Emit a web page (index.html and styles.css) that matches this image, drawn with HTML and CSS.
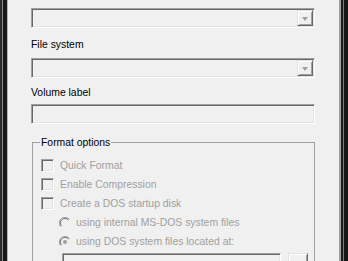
FILE: index.html
```html
<!DOCTYPE html>
<html lang="en">
<head>
    <meta charset="UTF-8">
    <title>Format</title>
    <link rel="stylesheet" href="styles.css">
</head>
<body>
    <div class="window">
        <div class="frame-left"></div>
        <div class="content">
            <div class="combo">
                <div class="drop"><span class="arrow"></span></div>
            </div>

            <div class="label first">File system</div>
            <div class="combo">
                <div class="drop"><span class="arrow"></span></div>
            </div>

            <div class="label">Volume label</div>
            <div class="edit"></div>

            <fieldset class="group">
                <legend>Format options</legend>
                <div class="options">
                    <div class="row">
                        <span class="check"></span>
                        <span>Quick Format</span>
                    </div>
                    <div class="row">
                        <span class="check"></span>
                        <span>Enable Compression</span>
                    </div>
                    <div class="row">
                        <span class="check"></span>
                        <span>Create a DOS startup disk</span>
                    </div>
                    <div class="row sub">
                        <svg class="radio" width="12" height="12" viewBox="0 0 12 12">
                            <path d="M10.5 2.5 A5.5 5.5 0 0 0 1.5 9.5" fill="none" stroke="#a0a0a0"/>
                            <path d="M9.5 3 A4.5 4.5 0 0 0 2.5 9" fill="none" stroke="#6d6d6d"/>
                        </svg>
                        <span>using internal MS-DOS system files</span>
                    </div>
                    <div class="row sub">
                        <svg class="radio" width="12" height="12" viewBox="0 0 12 12">
                            <path d="M10.5 2.5 A5.5 5.5 0 0 0 1.5 9.5" fill="none" stroke="#a0a0a0"/>
                            <path d="M9.5 3 A4.5 4.5 0 0 0 2.5 9" fill="none" stroke="#6d6d6d"/>
                            <circle cx="6" cy="6" r="2" fill="#a0a0a0"/>
                        </svg>
                        <span>using DOS system files located at:</span>
                    </div>
                    <div class="path-row">
                        <div class="edit small"></div>
                        <div class="browse"></div>
                    </div>
                </div>
            </fieldset>
        </div>
        <div class="frame-right"></div>
    </div>
</body>
</html>
```

FILE: styles.css
```css
html, body {
    margin: 0;
    padding: 0;
    background: #f0f0f0;
}
body {
    font-family: 'Liberation Sans', Arial, sans-serif;
    font-size: 10.4px;
    line-height: 13px;
    color: #000;
    overflow: hidden;
}
.window {
    display: flex;
    height: 261px;
    overflow: hidden;
}
.frame-left {
    width: 8px;
    flex: none;
    background: linear-gradient(to right, #2a2a2a 0 2px, #8a8a8a 2px 3px, #161616 3px 7px, #b4b4b4 7px 8px);
}
.frame-right {
    width: 9px;
    flex: none;
    background: linear-gradient(to right, #a0a0a0 0 2px, #1c1c1c 2px 4px, #7a7a7a 4px 5px, #151515 5px 9px);
}
.content {
    flex: 1;
    padding: 8px 0 0 23px;
    display: flex;
    flex-direction: column;
    align-items: flex-start;
    overflow: hidden;
}
.combo, .edit {
    box-sizing: border-box;
    width: 284px;
    height: 20px;
    flex: none;
    border-style: solid;
    border-width: 1px;
    border-color: #a0a0a0 #fff #fff #a0a0a0;
    box-shadow: inset 1px 1px #696969, inset -1px -1px #e3e3e3;
    background: #f0f0f0;
    position: relative;
}
.drop {
    position: absolute;
    right: 1px;
    top: 1px;
    width: 16px;
    height: 16px;
    box-sizing: border-box;
    border-style: solid;
    border-width: 1px;
    border-color: #e3e3e3 #696969 #696969 #e3e3e3;
    box-shadow: inset 1px 1px #fff, inset -1px -1px #a0a0a0;
    display: flex;
    align-items: center;
    justify-content: center;
}
.arrow {
    width: 0;
    height: 0;
    border-left: 3.5px solid transparent;
    border-right: 3.5px solid transparent;
    border-top: 4px solid #a0a0a0;
    margin-top: 1px;
}
.label {
    margin: 8px 0 5px 0;
    height: 13px;
}
.label.first {
    margin: 10px 0 7px 0;
}
.group {
    box-sizing: border-box;
    width: 283px;
    margin: 12px 0 0 1px;
    padding: 0;
    border: 1px solid #a0a0a0;
    border-bottom: none;
    flex: 1;
    min-inline-size: 0;
}
.group legend {
    margin-left: 7px;
    padding: 0 1px;
    line-height: 13px;
}
.options {
    padding: 10px 0 0 8px;
    display: flex;
    flex-direction: column;
    gap: 6px;
    color: #a0a0a0;
}
.row {
    display: flex;
    align-items: center;
    height: 13px;
    gap: 6px;
}
.row.sub {
    padding-left: 18px;
    gap: 5px;
}
.check {
    box-sizing: border-box;
    width: 13px;
    height: 13px;
    border-style: solid;
    border-width: 1px;
    border-color: #a0a0a0 #fff #fff #a0a0a0;
    box-shadow: inset 1px 1px #696969, inset -1px -1px #e3e3e3;
}
.radio {
    flex: none;
}
.path-row {
    display: flex;
    gap: 7px;
    padding-left: 21px;
    margin-top: -1px;
}
.edit.small {
    width: 219px;
}
.browse {
    box-sizing: border-box;
    width: 20px;
    height: 20px;
    border-style: solid;
    border-width: 1px;
    border-color: #e3e3e3 #696969 #696969 #e3e3e3;
    box-shadow: inset 1px 1px #fff, inset -1px -1px #a0a0a0;
}
```
